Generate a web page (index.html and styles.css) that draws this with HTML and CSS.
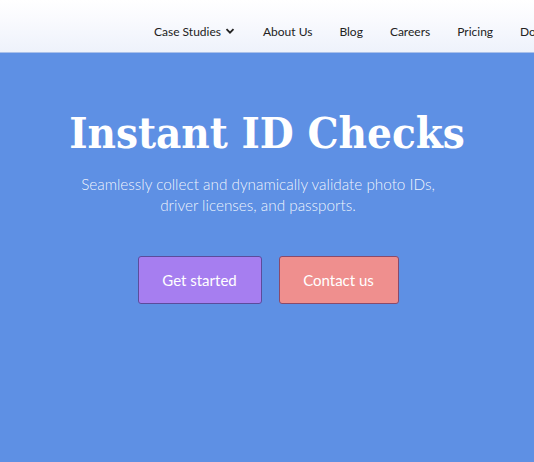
FILE: index.html
```html
<!DOCTYPE html>
<html lang="en">
<head>
    <meta charset="UTF-8">
    <meta name="viewport" content="width=device-width, initial-scale=1.0">
    <title>Instant ID Checks</title>
    <link rel="stylesheet" href="styles.css">
</head>
<body>
    <div class="header">
        <nav class="nav">
            <a href="#" class="nav-item nav-dropdown">Case Studies
                <svg class="chevron" width="10" height="10" viewBox="0 0 10 10"><path d="M1.5 3.2 L5 6.7 L8.5 3.2" fill="none" stroke="#222" stroke-width="1.8"/></svg>
            </a>
            <a href="#" class="nav-item">About Us</a>
            <a href="#" class="nav-item">Blog</a>
            <a href="#" class="nav-item">Careers</a>
            <a href="#" class="nav-item">Pricing</a>
            <a href="#" class="nav-item">Docs</a>
        </nav>
    </div>

    <div class="hero">
        <h1>Instant ID Checks</h1>
        <p class="subtitle">Seamlessly collect and dynamically validate photo IDs,<br>driver licenses, and passports.</p>
        <div class="actions">
            <a href="#" class="button button-primary">Get started</a>
            <a href="#" class="button button-secondary">Contact us</a>
        </div>
    </div>
</body>
</html>
```

FILE: styles.css
```css
body {
    font-family: 'Lato', sans-serif;
    margin: 0;
    padding: 0;
    background-color: #5e90e4;
    overflow: hidden;
}
.header {
    height: 53px;
    background: linear-gradient(to bottom, #ffffff 0%, #f9fafe 40%, #eef2fb 100%);
    border-bottom: 1px solid #a9c0ea;
    box-sizing: border-box;
    overflow: hidden;
}
.nav {
    display: flex;
    align-items: center;
    height: 100%;
    padding-left: 154px;
    gap: 27px;
    white-space: nowrap;
}
.nav-item {
    flex-shrink: 0;
    color: #222;
    text-decoration: none;
    font-size: 12px;
    display: flex;
    align-items: center;
    padding-top: 10px;
}
.nav-dropdown {
    margin-right: 1px;
}
.chevron {
    margin-left: 4px;
}
.hero {
    text-align: center;
    color: white;
    padding-top: 50px;
}
h1 {
    font-family: 'DejaVu Serif', serif;
    font-stretch: condensed;
    font-size: 43.5px;
    font-weight: bold;
    margin: 0;
    line-height: 60px;
}
.subtitle {
    font-size: 15.3px;
    line-height: 21px;
    margin: 11px 0 0;
    padding-right: 18px;
    color: rgba(255, 255, 255, 0.92);
    font-weight: 300;
}
.actions {
    display: flex;
    justify-content: center;
    gap: 17px;
    margin-top: 40px;
    padding-left: 2px;
}
.button {
    display: flex;
    align-items: center;
    justify-content: center;
    height: 48px;
    box-sizing: border-box;
    border-radius: 3px;
    color: white;
    text-decoration: none;
    font-size: 15px;
}
.button-primary {
    width: 124px;
    background-color: #a67ef0;
    border: 1px solid #5b4c9c;
}
.button-secondary {
    width: 120px;
    background-color: #ef8f8e;
    border: 1px solid #8a4a6a;
}
```
